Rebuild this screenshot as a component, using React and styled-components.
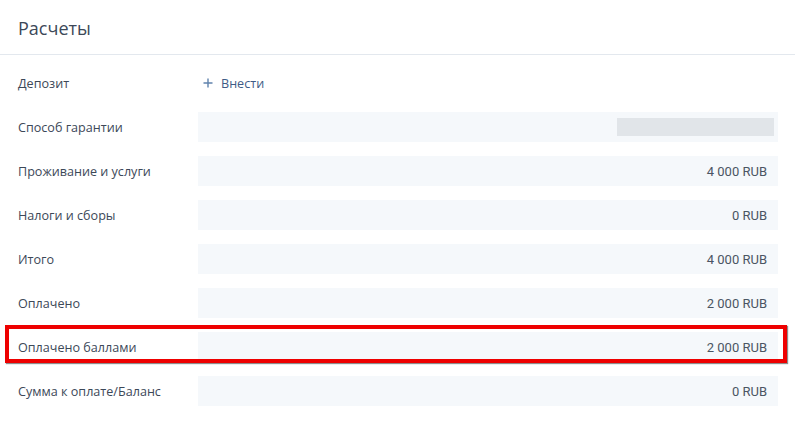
import React from "react";
import styled, { createGlobalStyle } from "styled-components";

const Global = createGlobalStyle`
  html, body { margin: 0; padding: 0; background: #fff; }
  body { font-family: "Open Sans", "Noto Sans", sans-serif; }
`;

const Page = styled.div`
  width: 795px;
  height: 424px;
  background: #fff;
  overflow: hidden;
`;

const Header = styled.div`
  height: 55px;
  border-bottom: 1px solid #e3e8ee;
  padding: 1px 18px 0;
  display: flex;
  align-items: center;
  box-sizing: border-box;
  font-size: 18px;
  color: #3c4858;
`;

const Rows = styled.div`
  display: flex;
  flex-direction: column;
  gap: 14px;
  padding: 13px 17px 0 18px;
`;

const Row = styled.div`
  position: relative;
  display: grid;
  grid-template-columns: 180px 1fr;
  height: 30px;
  align-items: center;
`;

const Label = styled.div`
  font-size: 12.6px;
  color: #3c4858;
`;

const Value = styled.div`
  height: 30px;
  background: ${(p) => (p.$plain ? "transparent" : "#f5f8fb")};
  display: flex;
  align-items: center;
  justify-content: ${(p) => (p.$plain ? "flex-start" : "flex-end")};
  padding: 0 ${(p) => (p.$plain ? "0 0 5px" : "11px 0 0")};
  font-family: Roboto, "Liberation Sans", sans-serif;
  font-size: 13px;
  color: #4b5563;
`;

const Placeholder = styled.div`
  width: 157px;
  height: 18px;
  background: #e1e5e9;
  margin-right: -7px;
`;

const AddLink = styled.span`
  display: inline-flex;
  align-items: center;
  gap: 8px;
  font-family: "Open Sans", sans-serif;
  font-size: 12.6px;
  color: #3e5b86;
  svg { color: #6083ad; }
`;

const Highlight = styled.div`
  position: absolute;
  left: -13px;
  right: -9px;
  top: -7px;
  bottom: -1px;
  border: 4px solid #ee0000;
  box-shadow: 1px 1px 1px rgba(0, 0, 0, 0.45);
  pointer-events: none;
`;

const rows = [
  { label: "Способ гарантии", placeholder: true },
  { label: "Проживание и услуги", value: "4 000 RUB" },
  { label: "Налоги и сборы", value: "0 RUB" },
  { label: "Итого", value: "4 000 RUB" },
  { label: "Оплачено", value: "2 000 RUB" },
  { label: "Оплачено баллами", value: "2 000 RUB", highlight: true },
  { label: "Сумма к оплате/Баланс", value: "0 RUB" },
];

export default function App() {
  return (
    <Page>
      <Global />
      <Header>Расчеты</Header>
      <Rows>
        <Row>
          <Label>Депозит</Label>
          <Value $plain>
            <AddLink>
              <svg width="10" height="10" viewBox="0 0 10 10">
                <path d="M5 0.5v9M0.5 5h9" stroke="currentColor" strokeWidth="1.4" />
              </svg>
              Внести
            </AddLink>
          </Value>
        </Row>
        {rows.map((r) => (
          <Row key={r.label}>
            <Label>{r.label}</Label>
            <Value>{r.placeholder ? <Placeholder /> : r.value}</Value>
            {r.highlight && <Highlight />}
          </Row>
        ))}
      </Rows>
    </Page>
  );
}
